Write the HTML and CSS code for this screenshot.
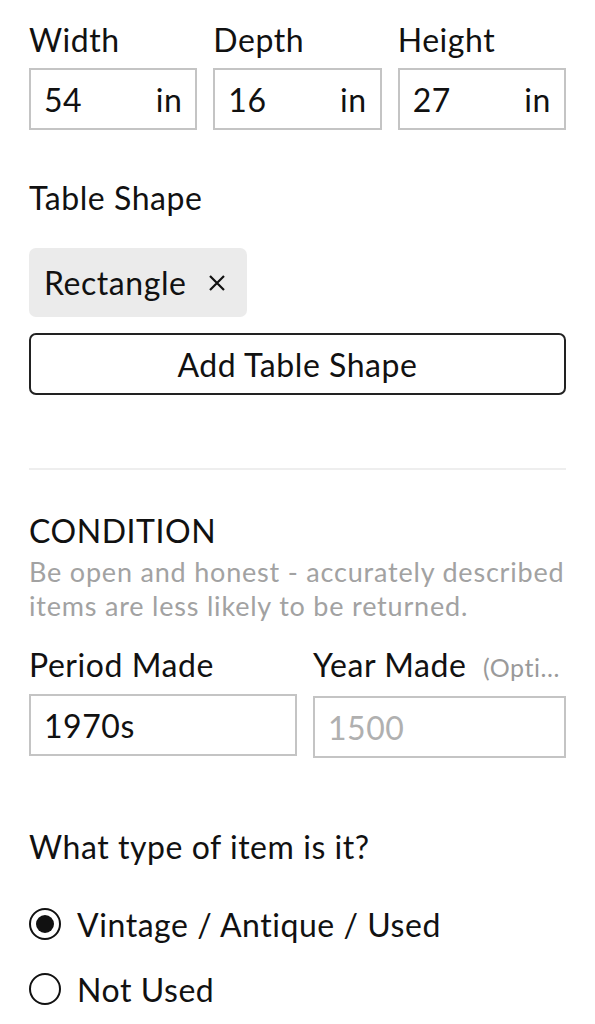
FILE: index.html
```html
<!DOCTYPE html>
<html>
  <head>
    <title>Item Details</title>
    <link rel="stylesheet" href="styles.css">
  </head>
  <body>
    <div class="dims">
      <div class="field">
        <label class="label">Width</label>
        <div class="box"><span>54</span><span>in</span></div>
      </div>
      <div class="field">
        <label class="label">Depth</label>
        <div class="box"><span>16</span><span>in</span></div>
      </div>
      <div class="field">
        <label class="label">Height</label>
        <div class="box"><span>27</span><span>in</span></div>
      </div>
    </div>

    <div class="shape">
      <div class="label">Table Shape</div>
      <div class="chips">
        <span class="chip">
          Rectangle
          <svg class="chip-x" width="18" height="18" viewBox="0 0 18 18">
            <path d="M2 2 L16 16 M16 2 L2 16" stroke="#111" stroke-width="2.2" fill="none" />
          </svg>
        </span>
      </div>
      <button class="add-btn">Add Table Shape</button>
    </div>

    <hr class="divider" />

    <div class="condition">
      <h2 class="section-title">CONDITION</h2>
      <p class="helper">
        Be open and honest - accurately described items are less likely to be
        returned.
      </p>
    </div>

    <div class="made">
      <div class="field">
        <label class="label">Period Made</label>
        <div class="box"><span>1970s</span></div>
      </div>
      <div class="field">
        <label class="label">Year Made <span class="optional">(Opti...</span></label>
        <div class="box"><span class="placeholder">1500</span></div>
      </div>
    </div>

    <div class="type">
      <div class="label">What type of item is it?</div>
      <div class="radios">
        <label class="radio-row">
          <span class="radio checked"></span>Vintage / Antique / Used
        </label>
        <label class="radio-row">
          <span class="radio"></span>Not Used
        </label>
      </div>
    </div>
  </body>
</html>
```

FILE: styles.css
```css
body {
  margin: 0;
  padding: 20px 29px 0;
  font-family: Lato, "Noto Sans", sans-serif;
  letter-spacing: 0.55px;
  color: #111;
  background: #fff;
}

.label {
  display: block;
  font-size: 32px;
  line-height: 40px;
  white-space: nowrap;
}

.dims {
  display: grid;
  grid-template-columns: 1fr 1fr 1fr;
  gap: 16px;
}

.field {
  min-width: 0;
}

.field .box {
  margin-top: 8px;
}

.box {
  height: 62px;
  box-sizing: border-box;
  border: 2px solid #c4c4c4;
  padding: 0 13px;
  display: flex;
  align-items: center;
  justify-content: space-between;
  font-size: 32px;
}

.shape {
  margin-top: 48px;
}

.chips {
  margin-top: 30px;
  display: flex;
}

.chip {
  display: flex;
  align-items: center;
  height: 69px;
  padding: 0 21px 0 15px;
  background-color: #ebebeb;
  border-radius: 7px;
  font-size: 32px;
}

.chip-x {
  margin-left: 22px;
}

.add-btn {
  display: block;
  width: 100%;
  margin-top: 16px;
  height: 62px;
  border: 2px solid #222;
  border-radius: 7px;
  background: #fff;
  font-family: inherit;
  letter-spacing: inherit;
  font-size: 32px;
  color: #111;
}

.divider {
  margin: 73px 0 0;
  border: 0;
  border-top: 2px solid #eeeeee;
}

.condition {
  margin-top: 41px;
}

.section-title {
  margin: 0;
  font-size: 32px;
  font-weight: normal;
  line-height: 40px;
}

.helper {
  margin: 4px 0 0;
  font-size: 27px;
  letter-spacing: 0.8px;
  line-height: 34px;
  color: #a2a2a2;
}

.made {
  margin-top: 22px;
  display: grid;
  grid-template-columns: 268px 1fr;
  gap: 16px;
}

.made .box {
  margin-top: 9px;
}

.optional {
  font-size: 25px;
  color: #9a9a9a;
  margin-left: 8px;
}

.placeholder {
  color: #b0b0b0;
}

.type {
  margin-top: 69px;
}

.radios {
  margin-top: 32px;
  display: flex;
  flex-direction: column;
  gap: 15px;
}

.radio-row {
  display: flex;
  align-items: center;
  height: 50px;
  font-size: 32px;
}

.radio {
  width: 32px;
  height: 32px;
  box-sizing: border-box;
  border: 2px solid #111;
  border-radius: 50%;
  margin-right: 16px;
  position: relative;
}

.radio.checked::after {
  content: "";
  position: absolute;
  left: 5px;
  top: 5px;
  width: 18px;
  height: 18px;
  border-radius: 50%;
  background: #111;
}
```
